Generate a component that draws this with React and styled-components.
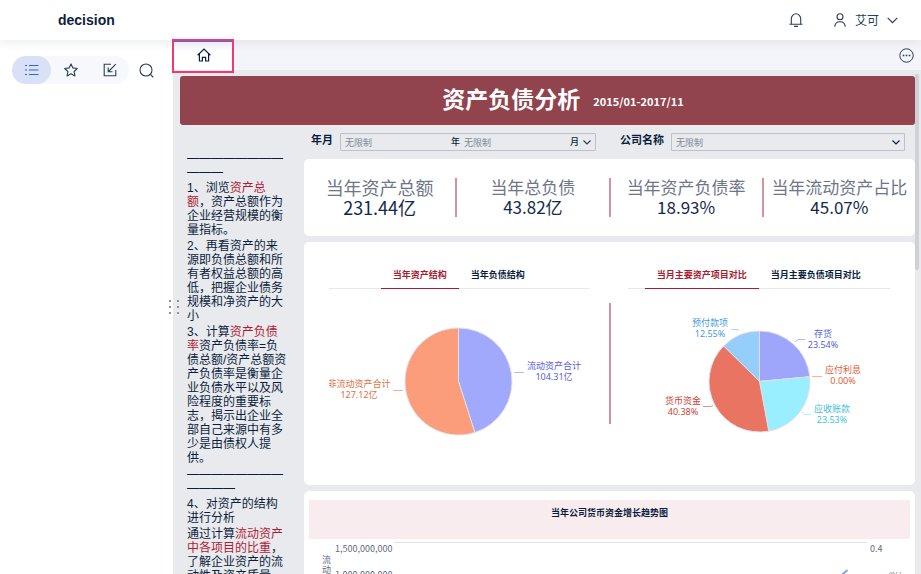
import React from "react";
import styled, { createGlobalStyle } from "styled-components";

const GlobalStyle = createGlobalStyle`
  *, *:before, *:after {
    box-sizing: border-box;
  }

  body {
    margin: 0;
    font-family: "Noto Sans", "Noto Sans CJK SC", sans-serif;
    font-size: 12px;
    color: #0c1e40;
    background: #fff;
  }

  button, input, select {
    font-family: inherit;
    color: inherit;
  }
`;

const Page = styled.div`
  display: flex;
  flex-direction: column;
  height: 100vh;
  overflow: hidden;
`;

/* ---------- header ---------- */

const Header = styled.header`
  position: relative;
  z-index: 1;
  display: flex;
  flex-shrink: 0;
  align-items: center;
  justify-content: space-between;
  height: 40px;
  padding: 0 23px 0 58px;
  background: #fff;
  box-shadow: 0 2px 10px rgba(30, 50, 80, 0.1);
`;

const Brand = styled.h1`
  margin: 0;
  font-family: "Liberation Sans", Arial, sans-serif;
  font-size: 14px;
  line-height: 16px;
`;

const HeaderActions = styled.div`
  display: flex;
  align-items: center;
  gap: 30px;
`;

const IconButton = styled.button`
  display: flex;
  align-items: center;
  justify-content: center;
  padding: 0;
  background: none;
  border: 0;
  color: #2b3d5e;
  cursor: pointer;
`;

const UserButton = styled(IconButton)`
  gap: 8px;
  font-family: "Noto Sans CJK SC", sans-serif;
  font-size: 12px;
  line-height: 16px;
`;

const Icon = styled.svg`
  display: block;
  flex-shrink: 0;
  fill: none;
  stroke: currentColor;
`;

/* ---------- sidebar ---------- */

const Workspace = styled.div`
  display: flex;
  flex: 1;
  min-height: 0;
`;

const Sidebar = styled.aside`
  position: relative;
  flex: 0 0 173px;
  padding: 16px 12px;
`;

const SidebarTools = styled.div`
  display: flex;
  align-items: center;
  gap: 10px;
`;

const Pill = styled.div`
  display: flex;
  background: #f6f8fb;
  border-radius: 14px;
`;

const PillButton = styled(IconButton)`
  width: 39px;
  height: 28px;
  border-radius: 14px;
  color: ${({ $active }) => ($active ? "#3263e0" : "#2b3d5e")};
  background: ${({ $active }) => ($active ? "#d8e1f6" : "transparent")};
`;

const Splitter = styled.div`
  position: absolute;
  z-index: 1;
  top: 260px;
  right: -6px;
  display: grid;
  grid-template-columns: 2px 2px;
  gap: 4px 6px;

  i {
    height: 2px;
    background: #8d90a0;
  }
`;

/* ---------- main ---------- */

const Main = styled.main`
  display: flex;
  flex: 1;
  flex-direction: column;
  min-width: 0;
  background: #e8eaed;
`;

const TabBar = styled.nav`
  display: flex;
  flex-shrink: 0;
  justify-content: space-between;
  height: 30px;
  padding-right: 7px;
  background: #f4f5fa;
`;

const HomeTab = styled(IconButton)`
  position: relative;
  z-index: 2;
  width: 61px;
  padding-bottom: 2px;
  background: linear-gradient(#e9edf5, #fff 10px);
  border-top: 2px solid #3f6fd8;
  color: #0c1e40;

  &:after {
    content: "";
    position: absolute;
    inset: -3px 0 -3px -1px;
    border: 2px solid #ee3a71;
  }
`;

const Board = styled.div`
  position: relative;
  flex: 1;
  min-height: 0;
  padding: 6px 6px 0 7px;
  overflow: hidden;
`;

const ScrollThumb = styled.div`
  position: absolute;
  top: 4px;
  right: 2px;
  width: 4px;
  height: 196px;
  background: #d0d1d7;
  border-radius: 2px;
`;

const Banner = styled.div`
  display: flex;
  align-items: center;
  justify-content: center;
  gap: 13px;
  height: 49px;
  padding: 0 0 5px 31px;
  color: #fff;
  background: #91444e;
  border-radius: 3px;
  font-family: "Noto Sans CJK SC", sans-serif;

  h2 {
    margin: 0;
    font-size: 23px;
    line-height: 28px;
  }

  strong {
    padding-top: 6px;
    font-size: 11px;
    line-height: 14px;
  }
`;

const Columns = styled.div`
  display: grid;
  grid-template-columns: 124px minmax(0, 1fr);
`;

const Notes = styled.div`
  padding: 26px 16px 0 7px;
  font-family: "Liberation Sans", "Noto Sans CJK SC", sans-serif;
  line-height: 14px;

  p {
    margin: 0 0 2px;
    overflow-wrap: anywhere;
  }

  em {
    font-style: normal;
    color: #b01c34;
  }
`;

const Content = styled.div`
  min-width: 0;
  padding-top: 8px;
`;

const Filters = styled.form`
  display: flex;
  gap: 24px;
  height: 18px;
  margin: 0 10px 8px 7px;
`;

const Field = styled.div`
  display: flex;
  flex: 1 1 0;
  gap: 7px;
  min-width: 0;
`;

const FieldLabel = styled.label`
  flex-shrink: 0;
  font-family: "Noto Sans CJK SC", sans-serif;
  font-size: 11px;
  font-weight: 700;
  line-height: 12px;
`;

const FieldBox = styled.div`
  position: relative;
  display: flex;
  flex: 1;
  align-items: center;
  min-width: 0;
  padding: 0 4px;
  border: 1px solid #bcc1cb;
  border-radius: 1px;
  font-size: 9px;
  line-height: 12px;
`;

const DateInput = styled.input`
  flex: 1;
  width: 0;
  min-width: 0;
  padding: 0;
  background: none;
  border: 0;
  outline: 0;
  font-size: 9px;

  &::placeholder {
    color: #7e8899;
  }
`;

const Unit = styled.span`
  margin-right: 4px;
  font-weight: 500;
`;

const Select = styled.select`
  position: absolute;
  inset: 0;
  padding: 0 4px;
  appearance: none;
  background: none;
  border: 0;
  color: #7e8899;
  font-size: 9px;
`;

const SelectArrow = styled.span`
  margin-left: auto;
`;

const Card = styled.section`
  height: ${({ $height }) => $height};
  margin-bottom: 6px;
  background: #fff;
  border-radius: 5px;
`;

const Kpis = styled(Card)`
  display: flex;
  align-items: center;
`;

const Kpi = styled.div`
  flex: 1 1 0;
  padding-bottom: 2px;
  text-align: center;
  white-space: nowrap;
  font-family: "Noto Sans CJK SC", sans-serif;
  font-size: ${({ $large }) => ($large ? "18px" : "17px")};
  line-height: 20px;

  span {
    display: block;
    color: #6d7789;
  }

  b {
    display: block;
    font-weight: 400;
    color: #14294e;
  }
`;

const Divider = styled.i`
  width: 2px;
  height: ${({ $height }) => $height};
  background: #d4929b;
`;

const Charts = styled(Card)`
  display: grid;
  grid-template-columns: minmax(0, 1fr) 2px minmax(0, 1fr);

  ${Divider} {
    margin-top: 61px;
  }
`;

const Panel = styled.div`
  display: flex;
  flex-direction: column;
  align-items: center;
  gap: 1px;
  padding: ${({ $padding }) => $padding};
`;

const PanelTabs = styled.div`
  display: flex;
  justify-content: center;
  align-self: stretch;
  height: 28px;
  border-bottom: 1px solid #e5e7ee;
`;

const PanelTab = styled.button`
  height: 28px;
  padding: 0 12px;
  background: none;
  border: 0;
  border-bottom: 1px solid ${({ $active }) => ($active ? "#a81c30" : "transparent")};
  color: ${({ $active }) => ($active ? "#a81c30" : "#0c1e40")};
  font-family: "Noto Sans CJK SC", sans-serif;
  font-size: 9px;
  font-weight: 700;
  line-height: 26px;
  white-space: nowrap;
  cursor: pointer;
`;

const PieSvg = styled.svg`
  display: block;
  flex-shrink: 0;
  font-size: 9px;
  text-anchor: middle;
`;

const Trend = styled(Card)`
  display: flex;
  flex-direction: column;
  padding: 9px 5px;
  margin-bottom: 0;
`;

const TrendTitle = styled.h3`
  flex-shrink: 0;
  height: 39px;
  margin: 0 0 3px;
  background: #f8ecee;
  font-family: "Noto Sans CJK SC", sans-serif;
  font-size: 9px;
  line-height: 26px;
  text-align: center;
`;

const TrendBody = styled.div`
  display: flex;
  flex: 1;
  padding: 0 12px 0 13px;
  color: #5f6a7c;
  font-family: "Noto Sans CJK SC", sans-serif;
  font-size: 9px;
`;

const AxisName = styled.span`
  width: 10px;
  padding-top: ${({ $top }) => $top};
  line-height: 10px;
`;

const Axis = styled.div`
  display: flex;
  flex-direction: column;
  gap: ${({ $gap }) => $gap};
  width: ${({ $width }) => $width};
  padding: 1px 3px 0;
  line-height: 12px;
  text-align: ${({ $align }) => $align};
`;

const Plot = styled.div`
  display: flex;
  flex: 1;
  justify-content: flex-end;
  padding-right: 18px;
  border-top: 1px solid #dfe1e6;
`;

const Chevron = () => (
  <Icon width="11" height="7" viewBox="0 0 11 7" strokeWidth="1.2">
    <path d="M.7.8 5.5 5.7 10.3.8" />
  </Icon>
);

const SmallChevron = () => (
  <Icon width="8" height="5" viewBox="0 0 8 5" strokeWidth="1.2">
    <path d="M.5.5 4 4 7.5.5" />
  </Icon>
);

const point = (cx, cy, r, share) => {
  const angle = share * Math.PI * 2;
  return `${cx + r * Math.sin(angle)} ${cy - r * Math.cos(angle)}`;
};

function Pie({ title, cx, cy, r, slices }) {
  let start = 0;

  return (
    <PieSvg width="259" height="190" viewBox="0 0 259 190" role="img" aria-label={title}>
      {slices.map((s) => {
        const end = start + s.share;
        const d = `M${cx} ${cy}L${point(cx, cy, r, start)}A${r} ${r} 0 ${
          s.share > 0.5 ? 1 : 0
        } 1 ${point(cx, cy, r, end)}Z`;
        start = end;
        return <path key={s.name} d={d} fill={s.fill} stroke="#e3dfe6" />;
      })}
      {slices.map((s) => (
        <g key={s.name} fill={s.color}>
          <path d={s.leader} fill="none" stroke={s.fill} opacity="0.8" />
          <text x={s.x} y={s.y}>{s.name}</text>
          <text x={s.x} y={s.y + 11}>{s.value}</text>
        </g>
      ))}
    </PieSvg>
  );
}

const structure = [
  { name: "流动资产合计", value: "104.31亿", share: 0.4507, fill: "#a0a9fb", color: "#5560da", x: 225, y: 79, leader: "M185 82.5h10" },
  { name: "非流动资产合计", value: "127.12亿", share: 0.5493, fill: "#fb9c7a", color: "#e0703f", x: 30, y: 97, leader: "M64 100.5h10" },
];

const assets = [
  { name: "存货", value: "23.54%", share: 0.2354, fill: "#9da6fb", color: "#5560da", x: 194, y: 47, leader: "M166 52l3-2.5h7" },
  { name: "应付利息", value: "0.00%", share: 0, fill: "#fb9c7a", color: "#dd6136", x: 214, y: 83, leader: "M183 86.5h10" },
  { name: "应收账款", value: "23.53%", share: 0.2353, fill: "#99eeff", color: "#45bfda", x: 203, y: 122, leader: "M173 122l2 2.5h7" },
  { name: "货币资金", value: "40.38%", share: 0.4038, fill: "#e97461", color: "#cb4230", x: 54, y: 114, leader: "M74 116.5h8l2-1" },
  { name: "预付款项", value: "12.55%", share: 0.1255, fill: "#96cefb", color: "#459bdd", x: 81, y: 36, leader: "M102 39.5h7v2" },
];

const kpis = [
  { label: "当年资产总额", value: "231.44亿", large: true },
  { label: "当年总负债", value: "43.82亿" },
  { label: "当年资产负债率", value: "18.93%" },
  { label: "当年流动资产占比", value: "45.07%" },
];

export default function App() {
  return (
    <Page>
      <GlobalStyle />
      <Header>
        <Brand>decision</Brand>
        <HeaderActions>
          <IconButton aria-label="消息">
            <Icon width="14" height="14" viewBox="0 0 14 14" strokeWidth="1.1">
              <path d="M2.3 11V5.800a4.700 5 0 0 1 9.400 0V11M.5 11.300h13M5 13.400h4" />
            </Icon>
          </IconButton>
          <UserButton>
            <Icon width="14" height="14" viewBox="0 0 14 14" strokeWidth="1.1">
              <circle cx="7" cy="3.8" r="3" />
              <path d="M1.800 13.800C2 10.500 4.200 8.800 7 8.800s5 1.700 5.200 5" />
            </Icon>
            艾可
            <Chevron />
          </UserButton>
        </HeaderActions>
      </Header>

      <Workspace>
        <Sidebar>
          <SidebarTools>
            <Pill>
              <PillButton $active aria-label="目录">
                <Icon width="14" height="12" viewBox="0 0 14 12" strokeWidth="1.2">
                  <path d="M0 1.500h2M0 6h2M0 10.500h2M4 1.500h9.500M4 6h9.500M4 10.500h9.500" />
                </Icon>
              </PillButton>
              <PillButton aria-label="收藏">
                <Icon width="14" height="14" viewBox="0 0 14 14" strokeWidth="1.1" strokeLinejoin="round">
                  <path d="M7 .9 8.900 4.900l4.400.6-3.200 3 .8 4.400L7 10.800l-3.900 2.100.8-4.400-3.200-3 4.400-.6Z" />
                </Icon>
              </PillButton>
              <PillButton aria-label="导入">
                <Icon width="14" height="14" viewBox="0 0 14 14" strokeWidth="1.1">
                  <path d="M8 1.200H1.200v11.600h11.600V7M12.800 1.200 5.500 8.500M5.200 4.500v4.300h4.300" />
                </Icon>
              </PillButton>
            </Pill>
            <IconButton aria-label="搜索">
              <Icon width="15" height="15" viewBox="0 0 15 15" strokeWidth="1.1">
                <circle cx="7" cy="7" r="6" />
                <path d="m11.500 11.500 2.800 2.800" />
              </Icon>
            </IconButton>
          </SidebarTools>
          <Splitter>
            <i /><i /><i /><i /><i /><i />
          </Splitter>
        </Sidebar>

        <Main>
          <TabBar>
            <HomeTab aria-label="首页">
              <Icon width="14" height="14" viewBox="0 0 14 14" strokeWidth="1.2">
                <path d="M.6 7.300 7 1l6.400 6.300M2.400 6v7h3V9.300h3.200V13h3V6" />
              </Icon>
            </HomeTab>
            <IconButton aria-label="更多">
              <Icon width="15" height="15" viewBox="0 0 15 15" strokeWidth="1">
                <circle cx="7.500" cy="7.500" r="6.700" />
                <path d="M3.700 7.500h1.600M6.700 7.500h1.600M9.700 7.500h1.600" strokeWidth="1.600" />
              </Icon>
            </IconButton>
          </TabBar>

          <Board>
            <Banner>
              <h2>资产负债分析</h2>
              <strong>2015/01-2017/11</strong>
            </Banner>

            <Columns>
              <Notes>
                <p>———————————</p>
                <p>1、浏览<em>资产总额</em>，资产总额作为企业经营规模的衡量指标。</p>
                <p>2、再看资产的来源即负债总额和所有者权益总额的高低，把握企业债务规模和净资产的大小</p>
                <p>
                  3、计算<em>资产负债率</em>资产负债率=负债总额/资产总额资产负债率是衡量企业负债水平以及风险程度的重要标志，揭示出企业全部自己来源中有多少是由债权人提供。
                </p>
                <p>————————————</p>
                <p>4、对资产的结构进行分析</p>
                <p>通过计算<em>流动资产中各项目的比重</em>，了解企业资产的流动性及资产质量</p>
              </Notes>

              <Content>
                <Filters>
                  <Field>
                    <FieldLabel htmlFor="year">年月</FieldLabel>
                    <FieldBox>
                      <DateInput id="year" placeholder="无限制" />
                      <Unit>年</Unit>
                      <DateInput aria-label="月份" placeholder="无限制" />
                      <Unit>月</Unit>
                      <IconButton type="button" aria-label="选择年月">
                        <SmallChevron />
                      </IconButton>
                    </FieldBox>
                  </Field>
                  <Field>
                    <FieldLabel htmlFor="company">公司名称</FieldLabel>
                    <FieldBox>
                      <Select id="company">
                        <option>无限制</option>
                      </Select>
                      <SelectArrow>
                        <SmallChevron />
                      </SelectArrow>
                    </FieldBox>
                  </Field>
                </Filters>

                <Kpis $height="77px">
                  {kpis.map((k, i) => (
                    <React.Fragment key={k.label}>
                      {i > 0 && <Divider $height="39px" />}
                      <Kpi $large={k.large}>
                        <span>{k.label}</span>
                        <b>{k.value}</b>
                      </Kpi>
                    </React.Fragment>
                  ))}
                </Kpis>

                <Charts $height="243px">
                  <Panel $padding="19px 20px 0 25px">
                    <PanelTabs>
                      <PanelTab $active>当年资产结构</PanelTab>
                      <PanelTab>当年负债结构</PanelTab>
                    </PanelTabs>
                    <Pie title="当年资产结构" cx={129.5} cy={91.5} r={53.5} slices={structure} />
                  </Panel>
                  <Divider $height="121px" />
                  <Panel $padding="19px 25px 0 17px">
                    <PanelTabs>
                      <PanelTab $active>当月主要资产项目对比</PanelTab>
                      <PanelTab>当月主要负债项目对比</PanelTab>
                    </PanelTabs>
                    <Pie title="当月主要资产项目对比" cx={130.5} cy={91.5} r={50.5} slices={assets} />
                  </Panel>
                </Charts>

                <Trend $height="260px">
                  <TrendTitle>当年公司货币资金增长趋势图</TrendTitle>
                  <TrendBody>
                    <AxisName $top="13px">流动资产</AxisName>
                    <Axis $width="62px" $align="right" $gap="14px">
                      <span>1,500,000,000</span>
                      <span>1,000,000,000</span>
                      <span>500,000,000</span>
                    </Axis>
                    <Plot>
                      <svg width="14" height="40" viewBox="0 0 14 40">
                        <path d="M12.500 27 0 38" fill="none" stroke="#8f99f5" strokeWidth="2" />
                      </svg>
                    </Plot>
                    <Axis $width="21px" $align="left" $gap="40px">
                      <span>0.4</span>
                      <span>0.2</span>
                    </Axis>
                    <AxisName $top="29px">(%)</AxisName>
                  </TrendBody>
                </Trend>
              </Content>
            </Columns>
            <ScrollThumb />
          </Board>
        </Main>
      </Workspace>
    </Page>
  );
}
